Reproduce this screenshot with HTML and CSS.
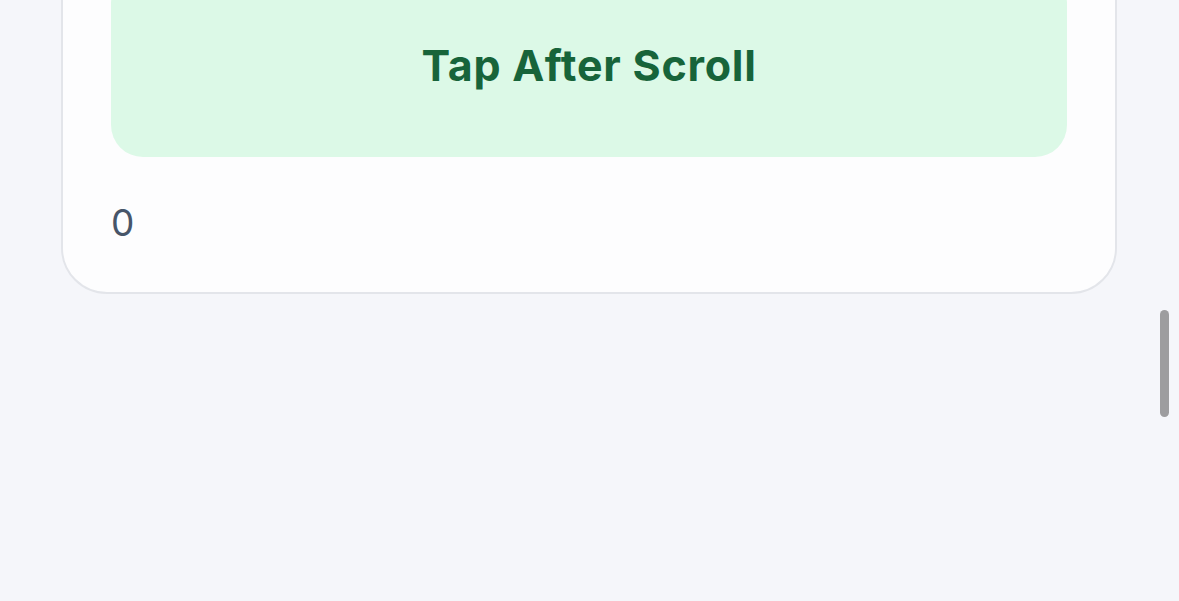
FILE: index.html
```html
<!DOCTYPE html>
<html lang="en">
<head>
<meta charset="utf-8">
<title>Tap After Scroll</title>
<link rel="stylesheet" href="styles.css">
</head>
<body>
  <main class="page">
    <section class="card">
      <button class="tap-btn" type="button">Tap After Scroll</button>
      <p class="count">0</p>
    </section>
  </main>
  <div class="scroll-thumb" aria-hidden="true"></div>
</body>
</html>
```
FILE: styles.css
```css
html, body {
  margin: 0;
  padding: 0;
  background: #f5f6fa;
  font-family: Inter, "Noto Sans", "Liberation Sans", sans-serif;
  overflow: hidden;
}

.page {
  padding: 0 62px 0 61px;
  margin-top: -70px;
}

.card {
  background: #fdfdfe;
  border: 2px solid #e3e5ea;
  border-radius: 46px;
  padding: 40px 48px 47px;
  display: flex;
  flex-direction: column;
}

.tap-btn {
  display: block;
  width: 100%;
  height: 185px;
  border: none;
  border-radius: 32px;
  background: #dcf9e7;
  color: #17643a;
  font-family: Inter, "Noto Sans", "Liberation Sans", sans-serif;
  font-size: 43px;
  font-weight: 700;
  letter-spacing: 0.75px;
  cursor: pointer;
}

.count {
  margin: 44px 0 0 0;
  font-size: 37px;
  line-height: 44px;
  color: #475569;
}

.scroll-thumb {
  position: fixed;
  top: 310px;
  right: 10px;
  width: 9px;
  height: 107px;
  border-radius: 5px;
  background: #9d9d9f;
}
```
